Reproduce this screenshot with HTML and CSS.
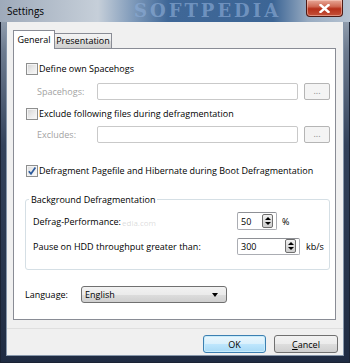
FILE: index.html
```html
<!DOCTYPE html>
<html lang="en">

<head>
    <meta charset="utf-8">
    <title>Settings</title>
    <link rel="stylesheet" href="styles.css">
</head>

<body>
    <div class="window">
        <div class="titlebar">
            <span class="title">Settings</span>
            <span class="watermark">SOFTPEDIA</span>
            <button type="button" class="close">
                <svg width="11" height="9" viewBox="0 0 11 9">
                    <path d="M1.5 1 L9.5 8 M9.5 1 L1.5 8" stroke="#fff" stroke-width="2.4" stroke-linecap="square"/>
                </svg>
            </button>
        </div>
        <div class="client">
            <div class="tabs">
                <div class="tab active">General</div>
                <div class="tab">Presentation</div>
            </div>
            <div class="panel">
                <span class="faint">edia.com</span>

                <div class="check-row"><span class="checkbox"></span>Define own Spacehogs</div>
                <div class="field-row">
                    <span class="field-label">Spacehogs:</span>
                    <span class="field-input"></span>
                    <span class="browse">...</span>
                </div>
                <div class="check-row second"><span class="checkbox"></span>Exclude following files during defragmentation</div>
                <div class="field-row small-gap">
                    <span class="field-label">Excludes:</span>
                    <span class="field-input"></span>
                    <span class="browse">...</span>
                </div>
                <div class="check-row third">
                    <span class="checkbox checked">
                        <svg width="10" height="10" viewBox="0 0 10 10">
                            <path d="M1.8 5.2 L4 7.8 L8.4 1.6" fill="none" stroke="#2c5a9c" stroke-width="1.7"/>
                        </svg>
                    </span>Defragment Pagefile and Hibernate during Boot Defragmentation
                </div>

                <fieldset class="group">
                    <legend>Background Defragmentation</legend>
                    <div class="spin-row">
                        <span class="spin-label">Defrag-Performance:</span>
                        <span class="spin short"><span>50</span><i class="spin-btn"></i></span>
                        <span class="unit">%</span>
                    </div>
                    <div class="spin-row next">
                        <span class="spin-label">Pause on HDD throughput greater than:</span>
                        <span class="spin long"><span>300</span><i class="spin-btn"></i></span>
                        <span class="unit wide">kb/s</span>
                    </div>
                </fieldset>

                <div class="lang-row">
                    <span class="lang-label">Language:</span>
                    <span class="select">English<i class="arrow"></i></span>
                </div>
            </div>
            <div class="footer">
                <button type="button" class="btn default">OK</button>
                <button type="button" class="btn"><u>C</u>ancel</button>
            </div>
        </div>
    </div>
</body>

</html>
```

FILE: styles.css
```css
body {
    margin: 0;
    font-family: "Open Sans", "Noto Sans", sans-serif;
    font-size: 9px;
    color: #000;
}

.window {
    width: 350px;
    height: 363px;
    display: flex;
    flex-direction: column;
    background: linear-gradient(180deg, #a9b5c3 0%, #6d7b8f 14%, #33425b 40%, #1f2b42 100%);
    box-shadow: inset 0 0 0 1px #1a2233;
}

.titlebar {
    position: relative;
    height: 22px;
    flex-shrink: 0;
    display: flex;
    align-items: flex-start;
    padding: 0 7px;
    background: linear-gradient(90deg, #9eaaba 0%, #c6cfd9 28%, #7f9aba 38%, #3f6797 48%, #3c6595 78%, #98abc1 88%, #b5c2d1 100%);
}

.title {
    margin-top: 4px;
    font-size: 10px;
    position: relative;
    z-index: 1;
}

/* watermark on the title bar */
.watermark {
    position: absolute;
    left: 134px;
    top: 0;
    font-family: "DejaVu Serif", serif;
    font-weight: bold;
    font-size: 18px;
    line-height: 22px;
    letter-spacing: 3px;
    color: rgba(140, 172, 214, 0.65);
}

.close {
    position: relative;
    margin-left: auto;
    width: 37px;
    height: 17px;
    padding: 0;
    border: 1px solid #4e1a14;
    border-top: none;
    border-radius: 0 0 4px 4px;
    background: linear-gradient(180deg, #e8a897 0%, #d06a55 40%, #b6301a 55%, #c4523a 100%);
    box-shadow: inset 0 0 0 1px rgba(255, 220, 210, 0.45);
    display: flex;
    align-items: center;
    justify-content: center;
}

.client {
    flex: 1;
    margin: 0 7px 8px;
    display: flex;
    flex-direction: column;
    background-color: #F0F0F0;
    box-shadow: 0 0 0 1px #8696aa;
}

.tabs {
    display: flex;
    align-items: flex-end;
    height: 18px;
    margin-top: 8px;
    padding-left: 6px;
}

.tab {
    box-sizing: border-box;
    height: 15px;
    width: 57px;
    border: 1px solid #898c95;
    border-left: none;
    border-bottom: none;
    background: linear-gradient(180deg, #f3f3f3 0%, #ebebeb 50%, #dddddd 51%, #cfcfcf 100%);
    text-align: center;
    line-height: 14px;
}

.tab.active {
    position: relative;
    z-index: 1;
    height: 19px;
    width: 42px;
    margin-bottom: -1px;
    border-left: 1px solid #898c95;
    background: #fff;
    line-height: 17px;
}

.panel {
    position: relative;
    box-sizing: border-box;
    height: 272px;
    margin: 0 7px 0 6px;
    padding: 13px 5px 0 11px;
    border: 1px solid #898c95;
    background-color: #fff;
}

/* faint site watermark */
.faint {
    position: absolute;
    left: 108px;
    top: 168px;
    color: rgba(150, 150, 150, 0.35);
    font-size: 8px;
    white-space: nowrap;
}

.check-row {
    display: flex;
    align-items: center;
    height: 13px;
    padding-left: 1px;
    white-space: nowrap;
}

.check-row.second {
    margin-top: 7px;
}

.check-row.third {
    margin-top: 21px;
}

.checkbox {
    box-sizing: border-box;
    width: 12px;
    height: 12px;
    margin-right: 1px;
    border: 1px solid #8e8f8f;
    background: linear-gradient(135deg, #d2d2d2 0%, #e9e9e9 50%, #fafafa 100%);
    box-shadow: inset 0 0 0 1px #f4f4f4;
    display: flex;
    align-items: center;
    justify-content: center;
}

.checkbox.checked {
    background: linear-gradient(135deg, #dcdcdc 0%, #f0f0f0 60%, #fff 100%);
}

.field-row {
    display: flex;
    align-items: center;
    height: 17px;
    margin-top: 8px;
    padding-left: 12px;
}

.field-row.small-gap {
    margin-top: 6px;
}

.field-label {
    width: 60px;
    color: #a3a3a3;
}

.field-input {
    box-sizing: border-box;
    width: 202px;
    height: 17px;
    border: 1px solid #c9c9c9;
    border-radius: 2px;
    background-color: #fff;
}

.browse {
    box-sizing: border-box;
    width: 26px;
    height: 17px;
    margin-left: 6px;
    border: 1px solid #b5b5b5;
    border-radius: 2px;
    background-color: #f4f4f4;
    color: #8a8a8a;
    text-align: center;
    line-height: 13px;
}

.group {
    margin: 16px 0 0;
    padding: 0 0 14px 7px;
    border: 1px solid #d5dfe5;
    border-radius: 3px;
}

.group legend {
    margin-left: -4px;
    padding: 0 2px;
    line-height: 13px;
}

.spin-row {
    display: flex;
    align-items: center;
    height: 18px;
    margin-top: 6px;
}

.spin-row.next {
    margin-top: 7px;
}

.spin-label {
    width: 204px;
    white-space: nowrap;
}

.spin {
    box-sizing: border-box;
    height: 18px;
    display: flex;
    align-items: center;
    justify-content: space-between;
    padding: 0 3px 0 3px;
    border: 1px solid #abadb3;
    border-top-color: #8e9095;
    border-radius: 2px;
    background-color: #fff;
}

.spin.short {
    width: 40px;
}

.spin.long {
    width: 63px;
    height: 17px;
}

.spin-btn {
    position: relative;
    box-sizing: border-box;
    width: 11px;
    height: 14px;
    border: 1px solid #6f6f6f;
    border-radius: 2px;
    background: linear-gradient(180deg, #f2f2f2 0%, #dcdcdc 50%, #cfcfcf 100%);
}

.spin-btn::before,
.spin-btn::after {
    content: "";
    position: absolute;
    left: 2px;
    border-left: 3px solid transparent;
    border-right: 3px solid transparent;
}

.spin-btn::before {
    top: 2px;
    border-bottom: 3px solid #000;
}

.spin-btn::after {
    bottom: 2px;
    border-top: 3px solid #000;
}

.unit {
    margin-left: 5px;
}

.unit.wide {
    margin-left: 6px;
}

.lang-row {
    display: flex;
    align-items: center;
    height: 17px;
    margin-top: 16px;
}

.lang-label {
    width: 56px;
}

.select {
    position: relative;
    box-sizing: border-box;
    width: 146px;
    height: 17px;
    padding-left: 3px;
    border: 1px solid #707070;
    border-radius: 3px;
    background: linear-gradient(180deg, #f2f2f2 0%, #ebebeb 50%, #dddddd 51%, #cfcfcf 100%);
    line-height: 15px;
}

.arrow {
    position: absolute;
    right: 8px;
    top: 6px;
    border-left: 3px solid transparent;
    border-right: 3px solid transparent;
    border-top: 4px solid #000;
}

.footer {
    flex: 1;
    display: flex;
    justify-content: flex-end;
    align-items: flex-start;
    gap: 8px;
    margin-top: 8px;
    padding: 6px 5px 0 0;
    border-top: 1px solid #dfdfdf;
}

.btn {
    box-sizing: border-box;
    width: 64px;
    height: 18px;
    padding: 0;
    border: 1px solid #707070;
    border-radius: 3px;
    background: linear-gradient(180deg, #f2f2f2 0%, #ebebeb 50%, #dddddd 51%, #cfcfcf 100%);
    font-family: inherit;
    font-size: 9px;
    color: #000;
}

.btn.default {
    width: 63px;
    border-color: #3c7fb1;
    background: linear-gradient(180deg, #eaf6fd 0%, #d9f0fc 50%, #bee6fd 51%, #a7d9f5 100%);
    box-shadow: inset 0 0 0 1px #c8ecfb;
}
```
